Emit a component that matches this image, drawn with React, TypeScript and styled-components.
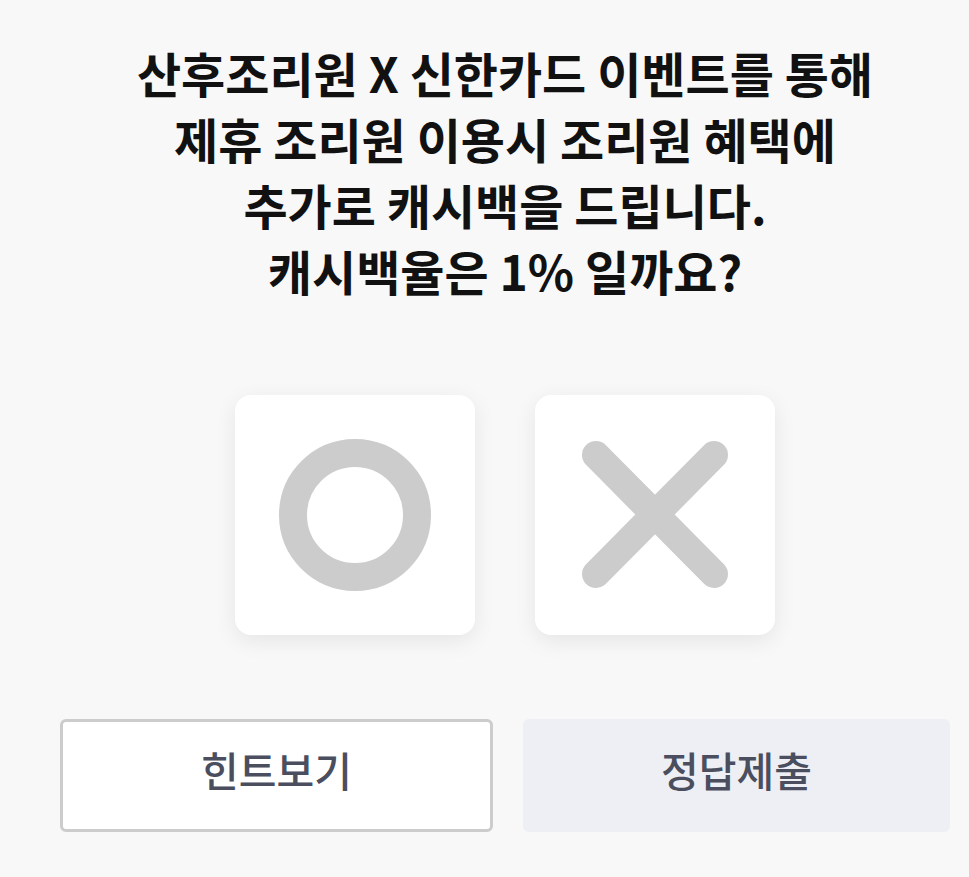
import React from 'react';
import styled, { createGlobalStyle } from 'styled-components';

const GlobalStyle = createGlobalStyle`
  html, body {
    margin: 0;
    padding: 0;
    background: #f8f8f8;
    overflow: hidden;
  }
  body {
    font-family: "Noto Sans CJK KR", "Noto Sans", sans-serif;
  }
`;

const Page = styled.div`
  width: 1010px;
  min-height: 877px;
  box-sizing: border-box;
  padding: 39px 60px 0;
  display: flex;
  flex-direction: column;
  align-items: center;
`;

const Question = styled.h1`
  margin: 0;
  font-size: 48px;
  line-height: 66px;
  font-weight: 700;
  color: #111111;
  text-align: center;
`;

const Choices = styled.div`
  display: flex;
  gap: 60px;
  margin-top: 92px;
`;

const ChoiceCard = styled.button`
  width: 240px;
  height: 240px;
  border: none;
  border-radius: 16px;
  background: #ffffff;
  box-shadow: 0 6px 22px rgba(0, 0, 0, 0.08);
  display: flex;
  align-items: center;
  justify-content: center;
  padding: 0;
  cursor: pointer;
`;

const Actions = styled.div`
  align-self: stretch;
  display: grid;
  grid-template-columns: 433px 427px;
  gap: 30px;
  margin-top: 84px;
`;

const ActionButton = styled.button<{ primary?: boolean }>`
  height: 113px;
  box-sizing: border-box;
  padding: 0 0 14px;
  border-radius: 6px;
  border: ${({ primary }) => (primary ? 'none' : '3px solid #cccccc')};
  background: ${({ primary }) => (primary ? '#eeeff4' : '#ffffff')};
  color: #4a4e5e;
  font-family: "Noto Sans CJK KR", "Noto Sans", sans-serif;
  font-size: 41px;
  font-weight: 500;
  cursor: pointer;
`;

const CircleIcon = () => (
  <svg width="152" height="152" viewBox="0 0 152 152">
    <circle cx="76" cy="76" r="62" fill="none" stroke="#cccccc" strokeWidth="28" />
  </svg>
);

const CrossIcon = () => (
  <svg width="150" height="150" viewBox="0 0 150 150">
    <path d="M16 15 L134 134 M134 15 L16 134" stroke="#cccccc" strokeWidth="28" strokeLinecap="round" />
  </svg>
);

export default function App() {
  return (
    <>
      <GlobalStyle />
      <Page>
        <Question>
          산후조리원 X 신한카드 이벤트를 통해
          <br />
          제휴 조리원 이용시 조리원 혜택에
          <br />
          추가로 캐시백을 드립니다.
          <br />
          캐시백율은 1% 일까요?
        </Question>
        <Choices>
          <ChoiceCard aria-label="O">
            <CircleIcon />
          </ChoiceCard>
          <ChoiceCard aria-label="X">
            <CrossIcon />
          </ChoiceCard>
        </Choices>
        <Actions>
          <ActionButton>힌트보기</ActionButton>
          <ActionButton primary>정답제출</ActionButton>
        </Actions>
      </Page>
    </>
  );
}
